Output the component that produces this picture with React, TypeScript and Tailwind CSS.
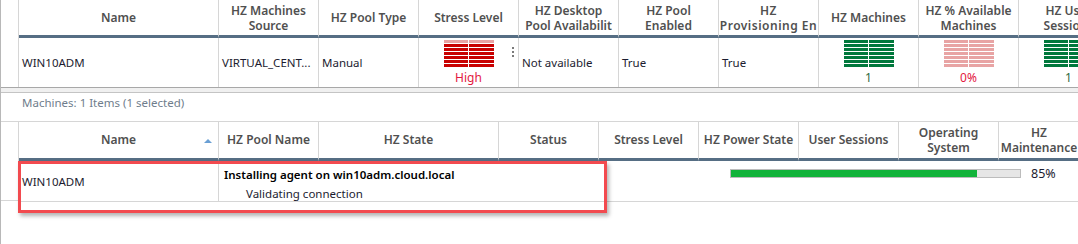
import React from "react";

const FONT = "font-['Segoe_UI','Noto_Sans',sans-serif]";

function Bars({ color, top }: { color: string; top?: string }) {
  const stripes = [0, 1, 2, 3, 4, 5, 6];
  return (
    <div className="flex gap-[1px]">
      {[24, 25].map((w) => (
        <div key={w} className="flex flex-col gap-[1px]" style={{ width: w }}>
          {stripes.map((i) => (
            <div key={i} className="h-[3px]" style={{ background: i === 0 && top ? top : color }} />
          ))}
        </div>
      ))}
    </div>
  );
}

function TopHead({ w, children }: { w: string; children: React.ReactNode }) {
  return (
    <div
      className={`${w} shrink-0 h-[38px] border-r border-r-[#d6d6d6] border-b-[3px] border-b-[#566e84] flex items-center justify-center overflow-hidden whitespace-nowrap text-center text-[12px] leading-[15px] font-semibold text-[#505050]`}
    >
      <div>{children}</div>
    </div>
  );
}

function TopCell({ w, children, center }: { w: string; children?: React.ReactNode; center?: boolean }) {
  return (
    <div
      className={`${w} shrink-0 h-[49px] pt-[1px] border-r border-r-[#d6d6d6] flex items-center overflow-hidden whitespace-nowrap text-[11.5px] text-[#1c1c30] ${center ? "justify-center" : "pl-[3px]"}`}
    >
      {children}
    </div>
  );
}

function BarCell({ color, top, label, labelColor }: { color: string; top?: string; label: string; labelColor: string }) {
  return (
    <div className="w-[100px] shrink-0 h-[49px] border-r border-r-[#d6d6d6] flex flex-col items-center pt-[2px] relative">
      <Bars color={color} top={top} />
      <div className={`mt-[4px] text-[12px] leading-[14px] ${labelColor}`}>{label}</div>
    </div>
  );
}

export default function App() {
  return (
    <div className={`relative w-[1078px] h-[244px] overflow-hidden bg-white border-l border-l-[#b8b8b8] ${FONT}`}>
      {/* Top table */}
      <div className="flex">
        <div className="w-[18px] shrink-0 h-[87px] border-r border-r-[#d6d6d6]" />
        <div className="flex flex-col">
          <div className="flex">
            <TopHead w="w-[200px]">Name</TopHead>
            <TopHead w="w-[100px]">HZ Machines<br />Source</TopHead>
            <TopHead w="w-[100px]">HZ Pool Type</TopHead>
            <TopHead w="w-[100px]">Stress Level</TopHead>
            <TopHead w="w-[100px]">HZ Desktop<br />Pool Availabilit</TopHead>
            <TopHead w="w-[100px]">HZ Pool<br />Enabled</TopHead>
            <TopHead w="w-[100px]"><span className="tracking-[0.5px]">HZ<br />Provisioning En</span></TopHead>
            <TopHead w="w-[100px]">HZ Machines</TopHead>
            <TopHead w="w-[100px]">HZ % Available<br />Machines</TopHead>
            <TopHead w="w-[100px]">HZ User<br />Sessions</TopHead>
          </div>
          <div className="flex">
            <TopCell w="w-[200px]">WIN10ADM</TopCell>
            <TopCell w="w-[100px]">VIRTUAL_CENT...</TopCell>
            <TopCell w="w-[100px]">Manual</TopCell>
            <div className="w-[100px] shrink-0 h-[49px] border-r border-r-[#d6d6d6] flex flex-col items-center pt-[2px] relative">
              <Bars color="#c80000" top="#e8a4a4" />
              <div className="mt-[4px] text-[12px] leading-[14px] text-[#e3173e]">High</div>
              <div className="absolute right-[4px] top-[9px] flex flex-col gap-[2px]">
                <div className="w-[2px] h-[2px] bg-[#7a7a7a]" />
                <div className="w-[2px] h-[2px] bg-[#7a7a7a]" />
                <div className="w-[2px] h-[2px] bg-[#7a7a7a]" />
              </div>
            </div>
            <TopCell w="w-[100px]">Not available</TopCell>
            <TopCell w="w-[100px]">True</TopCell>
            <TopCell w="w-[100px]">True</TopCell>
            <BarCell color="#00783c" label="1" labelColor="text-[#2d6b40]" />
            <BarCell color="#e8a4a4" label="0%" labelColor="text-[#e3173e]" />
            <BarCell color="#00783c" label="1" labelColor="text-[#2d6b40]" />
          </div>
        </div>
      </div>

      {/* Separator band */}
      <div className="h-[6px] border-t border-t-[#a8a8a8] border-b border-b-[#c4c4c4] bg-[#f0f0f0]" />

      {/* Bottom panel */}
      <div className="h-[28px] pt-[3px] pl-[21px] text-[11.5px] leading-[14px] text-[#6f7d8c]">
        Machines: 1 Items (1 selected)
      </div>
      <div className="border-t border-t-[#d6d6d6] flex">
        <div className="w-[18px] shrink-0 h-[79px] border-r border-r-[#d6d6d6] border-b border-b-[#d6d6d6]" />
        <div className="flex flex-col">
          <div className="flex">
            <div className="w-[200px] shrink-0 h-[39px] border-r border-r-[#d6d6d6] border-b-[3px] border-b-[#566e84] flex items-center justify-center relative text-[12px] font-semibold text-[#505050]">
              Name
              <div className="absolute right-[6px] top-[17px] w-0 h-0 border-l-[4px] border-r-[4px] border-b-[4px] border-l-transparent border-r-transparent border-b-[#6a9fd4]" />
            </div>
            {[
              ["w-[100px]", "HZ Pool Name"],
              ["w-[180px]", "HZ State"],
              ["w-[100px]", "Status"],
              ["w-[100px]", "Stress Level"],
              ["w-[100px]", "HZ Power State"],
              ["w-[100px]", "User Sessions"],
            ].map(([w, t]) => (
              <div
                key={t}
                className={`${w} shrink-0 h-[39px] border-r border-r-[#d6d6d6] border-b-[3px] border-b-[#566e84] flex items-center justify-center whitespace-nowrap overflow-hidden text-[12px] font-semibold text-[#505050]`}
              >
                {t}
              </div>
            ))}
            <div className="w-[100px] shrink-0 h-[39px] border-r border-r-[#d6d6d6] border-b-[3px] border-b-[#566e84] flex items-center justify-center text-center text-[12px] leading-[15px] font-semibold text-[#505050]">
              <div>Operating<br />System</div>
            </div>
            <div className="w-[80px] shrink-0 h-[39px] border-b-[3px] border-b-[#566e84] flex items-center justify-center text-center text-[12px] leading-[15px] font-semibold text-[#505050] whitespace-nowrap">
              <div>HZ<br />Maintenance</div>
            </div>
          </div>
          <div className="flex h-[41px] border-b border-b-[#d6d6d6]">
            <div className="w-[200px] shrink-0 pt-[1px] border-r border-r-[#d6d6d6] flex items-center pl-[3px] text-[11.5px] text-[#1c1c30]">
              WIN10ADM
            </div>
            <div className="w-[511px] shrink-0 pt-[4px] pl-[5px] text-[11.5px] leading-[19px] text-[#1c1c30]">
              <div className="font-semibold text-black">Installing agent on win10adm.cloud.local</div>
              <div className="pl-[22px]">Validating connection</div>
            </div>
            <div className="flex items-start pt-[8px]">
              <div className="w-[291px] h-[9px] border border-[#bcbcbc] bg-[#e6e6e6]">
                <div className="h-full bg-[#12b33a]" style={{ width: "85%" }} />
              </div>
              <div className="ml-[10px] -mt-[3px] text-[12.5px] leading-[16px] text-[#1c1c30]">85%</div>
            </div>
          </div>
        </div>
      </div>

      {/* Highlight rectangle */}
      <div className="absolute left-[17px] top-[161px] w-[589px] h-[52px] border-[3px] border-[#f24a4f] shadow-[2px_3px_4px_rgba(0,0,0,0.3)]" />
    </div>
  );
}
